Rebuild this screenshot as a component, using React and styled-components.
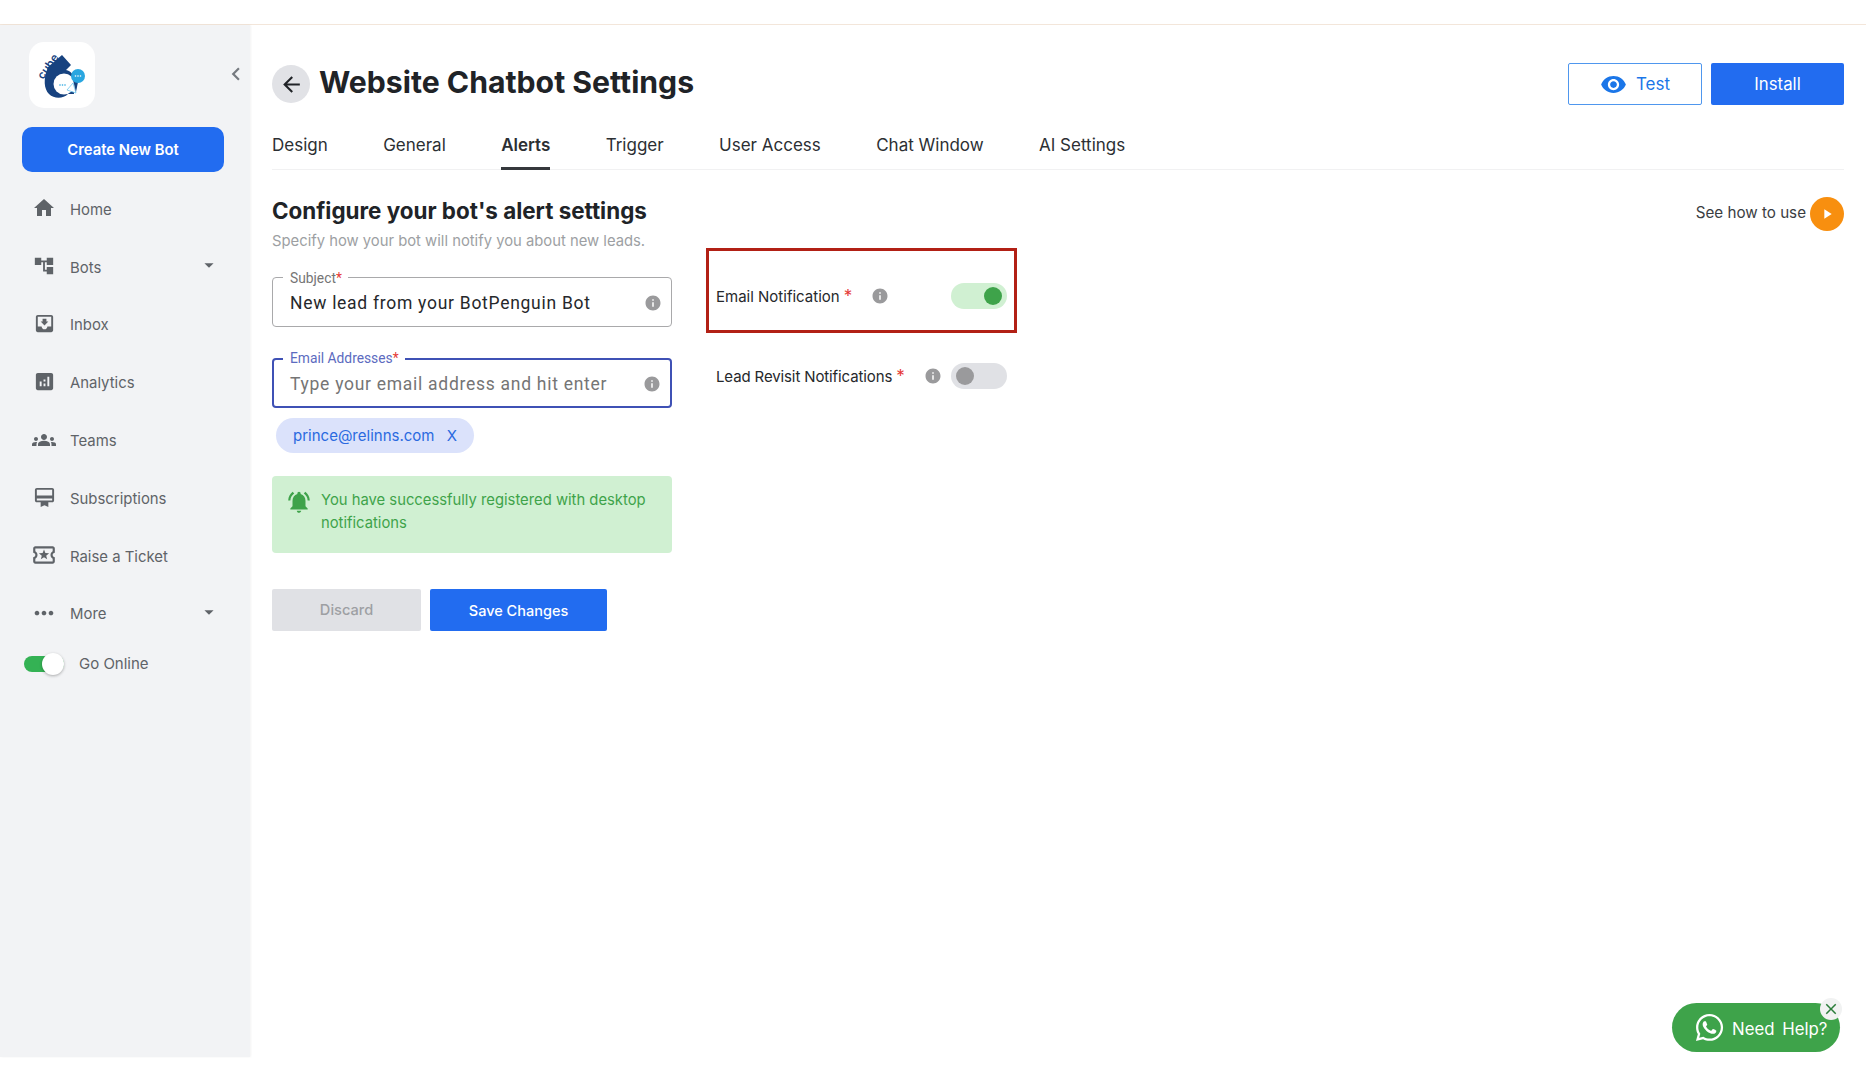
import React from "react";
import styled, { createGlobalStyle } from "styled-components";
import {
  MdHome, MdAccountTree, MdMoveToInbox, MdAnalytics, MdGroups, MdCardMembership,
  MdOutlineLocalActivity, MdMoreHoriz, MdArrowDropDown, MdChevronLeft, MdArrowBack,
  MdInfo, MdVisibility, MdNotificationsActive, MdPlayArrow, MdClose,
} from "react-icons/md";
import { FaWhatsapp } from "react-icons/fa";

const UI = `Inter, "Noto Sans", sans-serif`;

const Global = createGlobalStyle`
  html, body { margin: 0; padding: 0; background: #fff; }
  * { box-sizing: border-box; }
  body { font-family: ${UI}; overflow: hidden; }
`;

const Page = styled.div`
  position: relative;
  width: 1866px;
  height: 1080px;
  display: flex;
  flex-direction: column;
  background: #fff;
`;
const TopStrip = styled.div`
  height: 25px;
  flex: none;
  border-bottom: 1px solid #f3e6da;
`;
const Body = styled.div`
  height: 1032px;
  flex: none;
  display: flex;
`;
const Sidebar = styled.aside`
  width: 250px;
  flex: none;
  background: #f2f3f5;
  box-shadow: 1px 0 2px rgba(0, 0, 0, 0.05);
  padding: 17px 26px 0 22px;
  display: flex;
  flex-direction: column;
`;
const LogoRow = styled.div`
  display: flex;
  align-items: center;
  justify-content: space-between;
  padding-left: 7px;
  margin-right: -25px;
`;
const LogoBox = styled.div`
  width: 66px;
  height: 66px;
  border-radius: 15px;
  background: #fff;
  display: flex;
  align-items: center;
  justify-content: center;
`;
const Collapse = styled.span`
  display: flex;
  color: #75797f;
  font-size: 26px;
  margin-top: -2px;
`;
const CreateBtn = styled.button`
  width: 202px;
  height: 45px;
  margin-top: 19px;
  border: 0;
  border-radius: 10px;
  background: #226cf0;
  color: #fff;
  font: 600 14.8px ${UI};
`;
const Nav = styled.nav`
  display: flex;
  flex-direction: column;
  margin-top: 9px;
`;
const NavItem = styled.div`
  height: 57.8px;
  display: flex;
  align-items: center;
  color: #5f6368;
  font-size: 14.9px;
  font-weight: 400;
`;
const NavIcon = styled.span`
  width: 48px;
  flex: none;
  display: flex;
  justify-content: center;
  padding-right: 4px;
  color: #5f6368;
  font-size: ${(p) => p.$size || 22}px;
  line-height: 0;
  margin-top: -3px;
`;
const NavLabel = styled.span`
  flex: 1;
`;
const Caret = styled.span`
  display: flex;
  font-size: 22px;
  color: #5f6368;
  margin-right: 4px;
  margin-top: -5px;
`;
const OnlineRow = styled.div`
  display: flex;
  align-items: center;
  gap: 15px;
  margin-top: 11px;
  padding-left: 2px;
  color: #5f6368;
  font-size: 15px;
`;
const OnlineTrack = styled.span`
  width: 40px;
  height: 16px;
  border-radius: 8px;
  background: #34b254;
  display: flex;
  align-items: center;
  justify-content: flex-end;
`;
const OnlineThumb = styled.span`
  width: 22px;
  height: 22px;
  border-radius: 50%;
  background: #fff;
  box-shadow: 0 1px 3px rgba(0, 0, 0, 0.3);
`;
const Main = styled.main`
  flex: 1;
  min-width: 0;
  padding: 38px 22px 0 22px;
  display: flex;
  flex-direction: column;
`;
const HeaderRow = styled.div`
  display: flex;
  align-items: center;
  justify-content: space-between;
  height: 42px;
`;
const TitleWrap = styled.div`
  display: flex;
  align-items: center;
  gap: 9px;
`;
const BackBtn = styled.span`
  width: 38px;
  height: 38px;
  border-radius: 50%;
  background: #e1e2e6;
  color: #202327;
  display: flex;
  align-items: center;
  justify-content: center;
  font-size: 25px;
`;
const Title = styled.h1`
  margin: -4px 0 0;
  font-size: 30.2px;
  line-height: 38px;
  font-weight: 700;
  color: #202327;
`;
const HeaderActions = styled.div`
  display: flex;
  gap: 9px;
`;
const TestBtn = styled.button`
  width: 134px;
  height: 42px;
  border: 1.5px solid #4f97ee;
  border-radius: 2px;
  background: #fff;
  color: #1b76e8;
  font: 400 17px ${UI};
  display: flex;
  align-items: center;
  justify-content: center;
  gap: 9px;
  svg { font-size: 27px; }
`;
const InstallBtn = styled.button`
  width: 133px;
  height: 42px;
  border: 0;
  border-radius: 2px;
  background: #226cf0;
  color: #fff;
  font: 400 16.8px ${UI};
`;
const Tabs = styled.div`
  display: flex;
  gap: 55.4px;
  height: 65px;
  border-bottom: 1px solid #f1f1f2;
`;
const Tab = styled.div`
  padding-top: 28px;
  height: 65px;
  font-size: 17px;
  line-height: 24px;
  font-weight: ${(p) => (p.$active ? 600 : 400)};
  color: #2c2f33;
  border-bottom: ${(p) => (p.$active ? "3px solid #35383c" : "0")};
`;
const Content = styled.div`
  display: flex;
  margin-top: 24px;
`;
const LeftCol = styled.section`
  width: 400px;
  flex: none;
`;
const Heading = styled.h2`
  margin: 0;
  font-size: 22.4px;
  line-height: 34px;
  font-weight: 700;
  color: #202327;
`;
const Sub = styled.p`
  margin: 2px 0 0;
  font-size: 14.8px;
  line-height: 22px;
  color: #9d9fa3;
`;
const Field = styled.div`
  position: relative;
  height: ${(p) => p.$h}px;
  margin-top: ${(p) => p.$mt}px;
  border: ${(p) => (p.$focus ? "2px solid #3f51b5" : "1px solid #a9a9ab")};
  border-radius: 4px;
  display: flex;
  align-items: center;
  justify-content: space-between;
  padding: 1px 9px 0 ${(p) => (p.$focus ? 16 : 17)}px;
`;
const FieldLabel = styled.label`
  position: absolute;
  left: ${(p) => (p.$focus ? 9 : 10)}px;
  top: ${(p) => (p.$focus ? -10 : -8)}px;
  padding: 0 6px 0 7px;
  background: #fff;
  font: 400 13.8px/16px Roboto, sans-serif;
  color: ${(p) => (p.$focus ? "#5c6bc0" : "#757575")};
  em { color: #e53935; font-style: normal; }
`;
const FieldValue = styled.span`
  font: 400 17.5px Roboto, sans-serif;
  letter-spacing: 0.72px;
  color: ${(p) => (p.$placeholder ? "#757575" : "#26282b")};
`;
const InfoIcon = styled(MdInfo)`
  color: #9a9a9c;
  font-size: 18px;
  flex: none;
`;
const Chip = styled.div`
  display: inline-flex;
  align-items: center;
  height: 35px;
  width: 198px;
  margin: 10px 0 0 4px;
  padding: 0 17px;
  border-radius: 18px;
  background: #dbe2fb;
  color: #2a6ae0;
  font-size: 15px;
  justify-content: space-between;
`;
const Alert = styled.div`
  height: 77px;
  margin-top: 23px;
  padding: 13px 16px 0 14px;
  border-radius: 4px;
  background: #d0f0d2;
  color: #3ea34a;
  display: flex;
  gap: 9px;
  font-size: 14.8px;
  line-height: 23px;
  svg { font-size: 26px; flex: none; }
`;
const Actions = styled.div`
  display: flex;
  gap: 9px;
  margin-top: 36px;
`;
const DiscardBtn = styled.button`
  width: 149px;
  height: 42px;
  border: 0;
  border-radius: 2px;
  background: #e0e1e5;
  color: #9d9fa3;
  font: 500 14.6px ${UI};
`;
const SaveBtn = styled.button`
  width: 177px;
  height: 42px;
  border: 0;
  border-radius: 2px;
  background: #226cf0;
  color: #fff;
  font: 500 14.5px ${UI};
`;
const RightCol = styled.section`
  width: 311px;
  margin-left: 34px;
  padding-top: 54px;
`;
const Highlight = styled.div`
  height: 85px;
  border: 3px solid #b22015;
  padding: 11px 7px 0 7px;
  display: flex;
  align-items: center;
`;
const NotifyRow = styled.div`
  display: flex;
  align-items: center;
  width: 100%;
`;
const PlainRow = styled.div`
  display: flex;
  align-items: center;
  padding: 0 10px;
  margin-top: 30px;
`;
const NotifyLabel = styled.span`
  font-size: 15px;
  font-weight: 400;
  letter-spacing: ${(p) => p.$track || 0}px;
  color: #26282b;
  width: ${(p) => p.$w}px;
  em { color: #e53935; font-style: normal; font-size: 17px; line-height: 12px; margin-left: 4px; }
`;
const Toggle = styled.span`
  margin-left: auto;
  width: 56px;
  height: 26px;
  border-radius: 13px;
  padding: 0 5px;
  background: ${(p) => (p.$on ? "#d0f0d2" : "#e0e1e5")};
  display: flex;
  align-items: center;
  justify-content: ${(p) => (p.$on ? "flex-end" : "flex-start")};
`;
const Thumb = styled.span`
  width: 18px;
  height: 18px;
  border-radius: 50%;
  background: ${(p) => (p.$on ? "#3ea34a" : "#9a9a9c")};
`;
const HowTo = styled.div`
  margin-left: auto;
  display: flex;
  align-items: center;
  gap: 4px;
  height: 34px;
  margin-top: 3px;
  font-size: 15.2px;
  color: #3a3d42;
  span:first-child { margin-top: -3px; }
`;
const PlayDot = styled.span`
  width: 34px;
  height: 34px;
  border-radius: 50%;
  background: #f88f0f;
  color: #fff;
  display: flex;
  align-items: center;
  justify-content: center;
  font-size: 16px;
`;
const HelpPill = styled.div`
  position: absolute;
  left: 1672px;
  top: 1003px;
  width: 168px;
  height: 49px;
  border-radius: 25px;
  background: #3ea34a;
  color: #fff;
  display: flex;
  align-items: center;
  padding-left: 22px;
  gap: 7px;
  font: 400 16.8px ${UI};
  word-spacing: 3px;
  svg { font-size: 31px; flex: none; }
  > span:nth-child(2) { margin-top: 2px; }
`;
const HelpClose = styled.span`
  position: absolute;
  right: -2px;
  top: -5px;
  width: 22px;
  height: 22px;
  border-radius: 50%;
  background: #f1f2f2;
  color: #2b7d3a;
  display: flex;
  align-items: center;
  justify-content: center;
  svg { font-size: 18px; }
`;

const Logo = () => (
  <svg width="66" height="66" viewBox="0 0 66 66" aria-hidden="true">
    <path d="M19 25 L33 13 L42 23 L37 28 C42 29 45 33 45 38 L45 52 L39 52 C34 57 25 57 20 52 C15 47 14 37 19 25 Z" fill="#17427f" />
    <circle cx="35" cy="42" r="10.500" fill="#fff" />
    <path d="M38 48 L47 51 L44 41 Z" fill="#fff" stroke="#5cc0ee" strokeWidth="0.7" />
    <path d="M44 38 L47 50 L49 40 Z" fill="#17427f" />
    <circle cx="49" cy="34" r="7" fill="#29a6e0" />
    <g fill="#29a6e0">
      <circle cx="31" cy="43" r="0.800" /><circle cx="33.500" cy="43" r="0.800" /><circle cx="36" cy="43" r="0.800" />
    </g>
    <g fill="#fff">
      <circle cx="46.500" cy="34" r="0.800" /><circle cx="49" cy="34" r="0.800" /><circle cx="51.500" cy="34" r="0.800" />
    </g>
    <text transform="translate(14 38) rotate(-54)" fontFamily="Inter, sans-serif" fontSize="11.500" fontWeight="600" fill="#17427f">cube</text>
  </svg>
);

const navItems = [
  { label: "Home", Icon: MdHome, size: 24 },
  { label: "Bots", Icon: MdAccountTree, size: 22, caret: true },
  { label: "Inbox", Icon: MdMoveToInbox, size: 23 },
  { label: "Analytics", Icon: MdAnalytics, size: 23 },
  { label: "Teams", Icon: MdGroups, size: 24 },
  { label: "Subscriptions", Icon: MdCardMembership, size: 23 },
  { label: "Raise a Ticket", Icon: MdOutlineLocalActivity, size: 26 },
  { label: "More", Icon: MdMoreHoriz, size: 28, caret: true },
];
const tabs = ["Design", "General", "Alerts", "Trigger", "User Access", "Chat Window", "AI Settings"];

export default function App() {
  return (
    <Page>
      <Global />
      <TopStrip />
      <Body>
        <Sidebar>
          <LogoRow>
            <LogoBox><Logo /></LogoBox>
            <Collapse><MdChevronLeft /></Collapse>
          </LogoRow>
          <CreateBtn>Create New Bot</CreateBtn>
          <Nav>
            {navItems.map(({ label, Icon, size, caret }) => (
              <NavItem key={label}>
                <NavIcon $size={size}><Icon /></NavIcon>
                <NavLabel>{label}</NavLabel>
                {caret && <Caret><MdArrowDropDown /></Caret>}
              </NavItem>
            ))}
          </Nav>
          <OnlineRow>
            <OnlineTrack><OnlineThumb /></OnlineTrack>
            <span>Go Online</span>
          </OnlineRow>
        </Sidebar>
        <Main>
          <HeaderRow>
            <TitleWrap>
              <BackBtn><MdArrowBack /></BackBtn>
              <Title>Website Chatbot Settings</Title>
            </TitleWrap>
            <HeaderActions>
              <TestBtn><MdVisibility />Test</TestBtn>
              <InstallBtn>Install</InstallBtn>
            </HeaderActions>
          </HeaderRow>
          <Tabs>
            {tabs.map((t) => (
              <Tab key={t} $active={t === "Alerts"}>{t}</Tab>
            ))}
          </Tabs>
          <Content>
            <LeftCol>
              <Heading>Configure your bot's alert settings</Heading>
              <Sub>Specify how your bot will notify you about new leads.</Sub>
              <Field $h={50} $mt={25}>
                <FieldLabel>Subject<em>*</em></FieldLabel>
                <FieldValue>New lead from your BotPenguin Bot</FieldValue>
                <InfoIcon />
              </Field>
              <Field $h={50} $mt={31} $focus>
                <FieldLabel $focus>Email Addresses<em>*</em></FieldLabel>
                <FieldValue $placeholder>Type your email address and hit enter</FieldValue>
                <InfoIcon />
              </Field>
              <Chip><span>prince@relinns.com</span><span>X</span></Chip>
              <Alert>
                <MdNotificationsActive />
                <span>You have successfully registered with desktop notifications</span>
              </Alert>
              <Actions>
                <DiscardBtn>Discard</DiscardBtn>
                <SaveBtn>Save Changes</SaveBtn>
              </Actions>
            </LeftCol>
            <RightCol>
              <Highlight>
                <NotifyRow>
                  <NotifyLabel $w={155}>Email Notification<em>*</em></NotifyLabel>
                  <InfoIcon />
                  <Toggle $on><Thumb $on /></Toggle>
                </NotifyRow>
              </Highlight>
              <PlainRow>
                <NotifyLabel $w={208} $track={-0.12}>Lead Revisit Notifications<em>*</em></NotifyLabel>
                <InfoIcon />
                <Toggle><Thumb /></Toggle>
              </PlainRow>
            </RightCol>
            <HowTo><span>See how to use</span><PlayDot><MdPlayArrow /></PlayDot></HowTo>
          </Content>
        </Main>
      </Body>
      <HelpPill>
        <FaWhatsapp />
        <span>Need Help?</span>
        <HelpClose><MdClose /></HelpClose>
      </HelpPill>
    </Page>
  );
}
